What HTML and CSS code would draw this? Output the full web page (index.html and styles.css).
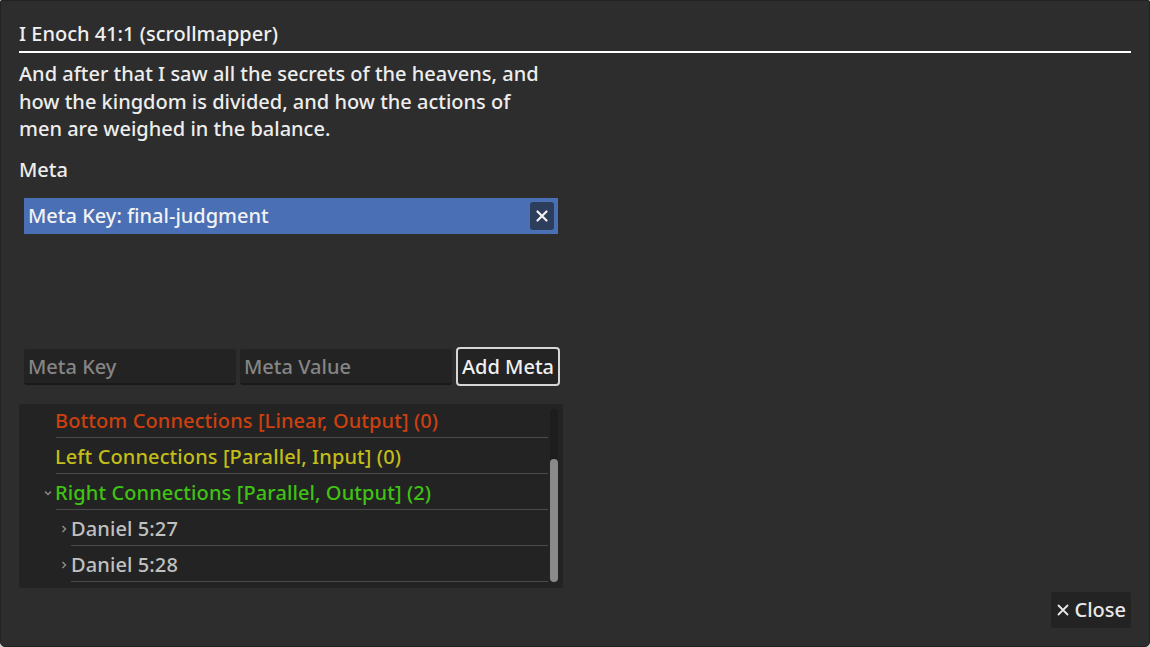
FILE: index.html
```html
<!DOCTYPE html>
<html>
<head>
<meta charset="utf-8">
<link rel="stylesheet" href="styles.css">
</head>
<body>
<div class="window">
  <div class="title">I Enoch 41:1 (scrollmapper)</div>
  <div class="verse">And after that I saw all the secrets of the heavens, and how the kingdom is divided, and how the actions of men are weighed in the balance.</div>
  <div class="section-label">Meta</div>
  <div class="meta-list">
    <div class="meta-item">
      <span>Meta Key: final-judgment</span>
      <span class="meta-remove"><svg width="12" height="12" viewBox="0 0 12 12"><path d="M1.5 1.5 L10.5 10.5 M10.5 1.5 L1.5 10.5" stroke="#f2f2f2" stroke-width="2.2" stroke-linecap="round"/></svg></span>
    </div>
  </div>
  <div class="meta-form">
    <div class="input">Meta Key</div>
    <div class="input">Meta Value</div>
    <div class="btn-add">Add Meta</div>
  </div>
  <div class="tree">
    <div class="tree-inner">
      <div class="row lvl0"><span class="chev"></span><span class="label orange">Bottom Connections [Linear, Output] (0)</span></div>
      <div class="row lvl0"><span class="chev"></span><span class="label yellow">Left Connections [Parallel, Input] (0)</span></div>
      <div class="row lvl0"><span class="chev down"><svg width="10" height="8" viewBox="0 0 10 8"><path d="M2 2.5 L5 5.5 L8 2.5" fill="none" stroke="#8a8a8a" stroke-width="1.5"/></svg></span><span class="label green">Right Connections [Parallel, Output] (2)</span></div>
      <div class="row lvl1"><span class="chev"><svg width="8" height="10" viewBox="0 0 8 10"><path d="M2.5 2 L5.5 5 L2.5 8" fill="none" stroke="#8a8a8a" stroke-width="1.5"/></svg></span><span class="label gray">Daniel 5:27</span></div>
      <div class="row lvl1"><span class="chev"><svg width="8" height="10" viewBox="0 0 8 10"><path d="M2.5 2 L5.5 5 L2.5 8" fill="none" stroke="#8a8a8a" stroke-width="1.5"/></svg></span><span class="label gray">Daniel 5:28</span></div>
    </div>
    <div class="scrollbar"><div class="thumb"></div></div>
  </div>
  <div class="footer">
    <div class="btn-close"><svg class="close-x" width="12" height="12" viewBox="0 0 12 12"><path d="M1.5 1.5 L10.5 10.5 M10.5 1.5 L1.5 10.5" stroke="#e8e8e8" stroke-width="1.8" stroke-linecap="round"/></svg><span>Close</span></div>
  </div>
</div>
</body>
</html>
```
FILE: styles.css
```css
html, body {
  margin: 0;
  padding: 0;
  background: #cfcfcf;
}
body {
  font-family: "Noto Sans", "Open Sans", sans-serif;
  font-weight: 500;
  color: #e6e6e6;
}
.window {
  box-sizing: border-box;
  width: 1150px;
  height: 647px;
  background: #2d2d2d;
  border: 1px solid #222222;
  border-radius: 2px 2px 5px 5px;
  padding: 19px 18px 0 18px;
  display: flex;
  flex-direction: column;
}
.title {
  font-size: 20px;
  line-height: 28px;
  color: #f0f0f0;
  padding-bottom: 3px;
  border-bottom: 2px solid #ffffff;
}
.verse {
  width: 530px;
  font-size: 20px;
  line-height: 27.5px;
  margin-top: 7px;
  color: #ededed;
}
.section-label {
  font-size: 20px;
  line-height: 28px;
  margin-top: 13px;
  color: #ededed;
}
.meta-list {
  margin-top: 14px;
  margin-left: 5px;
  width: 534px;
  height: 149px;
}
.meta-item {
  height: 36px;
  background: #4a6fb5;
  display: flex;
  align-items: center;
  justify-content: space-between;
  padding: 0 4px 0 4px;
  font-size: 20px;
  color: #f2f2f2;
}
.meta-remove {
  width: 24px;
  height: 28px;
  background: #2d3d5c;
  border-radius: 3px;
  display: flex;
  align-items: center;
  justify-content: center;
}
.meta-form {
  display: flex;
  align-items: center;
  gap: 4px;
  margin-left: 5px;
  height: 40px;
}
.input {
  box-sizing: border-box;
  width: 212px;
  height: 36px;
  background: #232323;
  border-radius: 3px;
  border-bottom: 2px solid #191919;
  padding: 0 4px;
  font-size: 20px;
  line-height: 36px;
  color: #858585;
}
.btn-add {
  box-sizing: border-box;
  height: 39px;
  padding: 0 4px;
  border: 2px solid #d6d6d6;
  border-radius: 4px;
  background: #232323;
  font-size: 20px;
  line-height: 35px;
  color: #f0f0f0;
}
.tree {
  margin-top: 17px;
  width: 544px;
  height: 184px;
  background: #232323;
  border-radius: 3px;
  position: relative;
  overflow: hidden;
  display: flex;
}
.tree-inner {
  flex: 1;
  margin-top: -2px;
  padding-right: 15px;
}
.row {
  box-sizing: border-box;
  height: 36px;
  padding-top: 2px;
  display: flex;
  align-items: center;
  font-size: 20px;
  letter-spacing: 0.1px;
  position: relative;
}
.row::after {
  content: "";
  position: absolute;
  bottom: 0;
  right: 0;
  height: 1px;
  background: #4a4a4a;
}
.lvl0 { padding-left: 21px; }
.lvl0::after { left: 37px; }
.lvl1 { padding-left: 37px; }
.lvl1::after { left: 52px; }
.chev {
  width: 15px;
  height: 34px;
  display: flex;
  align-items: center;
  justify-content: center;
}
.label { padding-left: 0; }
.orange { color: #cc4010; }
.yellow { color: #c2bd1a; }
.green { color: #3fc213; }
.gray { color: #c0c0c0; }
.scrollbar {
  position: absolute;
  right: 5px;
  top: 5px;
  width: 8px;
  height: 173px;
  background: #1d1d1d;
  border-radius: 4px;
}
.thumb {
  position: absolute;
  left: 0;
  right: 0;
  bottom: 0;
  height: 123px;
  background: #8a8a8a;
  border-radius: 4px;
}
.footer {
  display: flex;
  justify-content: flex-end;
  margin-top: 4px;
}
.btn-close {
  height: 36px;
  padding: 0 5px 0 6px;
  background: #232323;
  border-radius: 3px;
  font-size: 20px;
  line-height: 36px;
  color: #e8e8e8;
  display: flex;
  align-items: center;
  gap: 5px;
}
.close-x { margin-top: 1px; }
```
